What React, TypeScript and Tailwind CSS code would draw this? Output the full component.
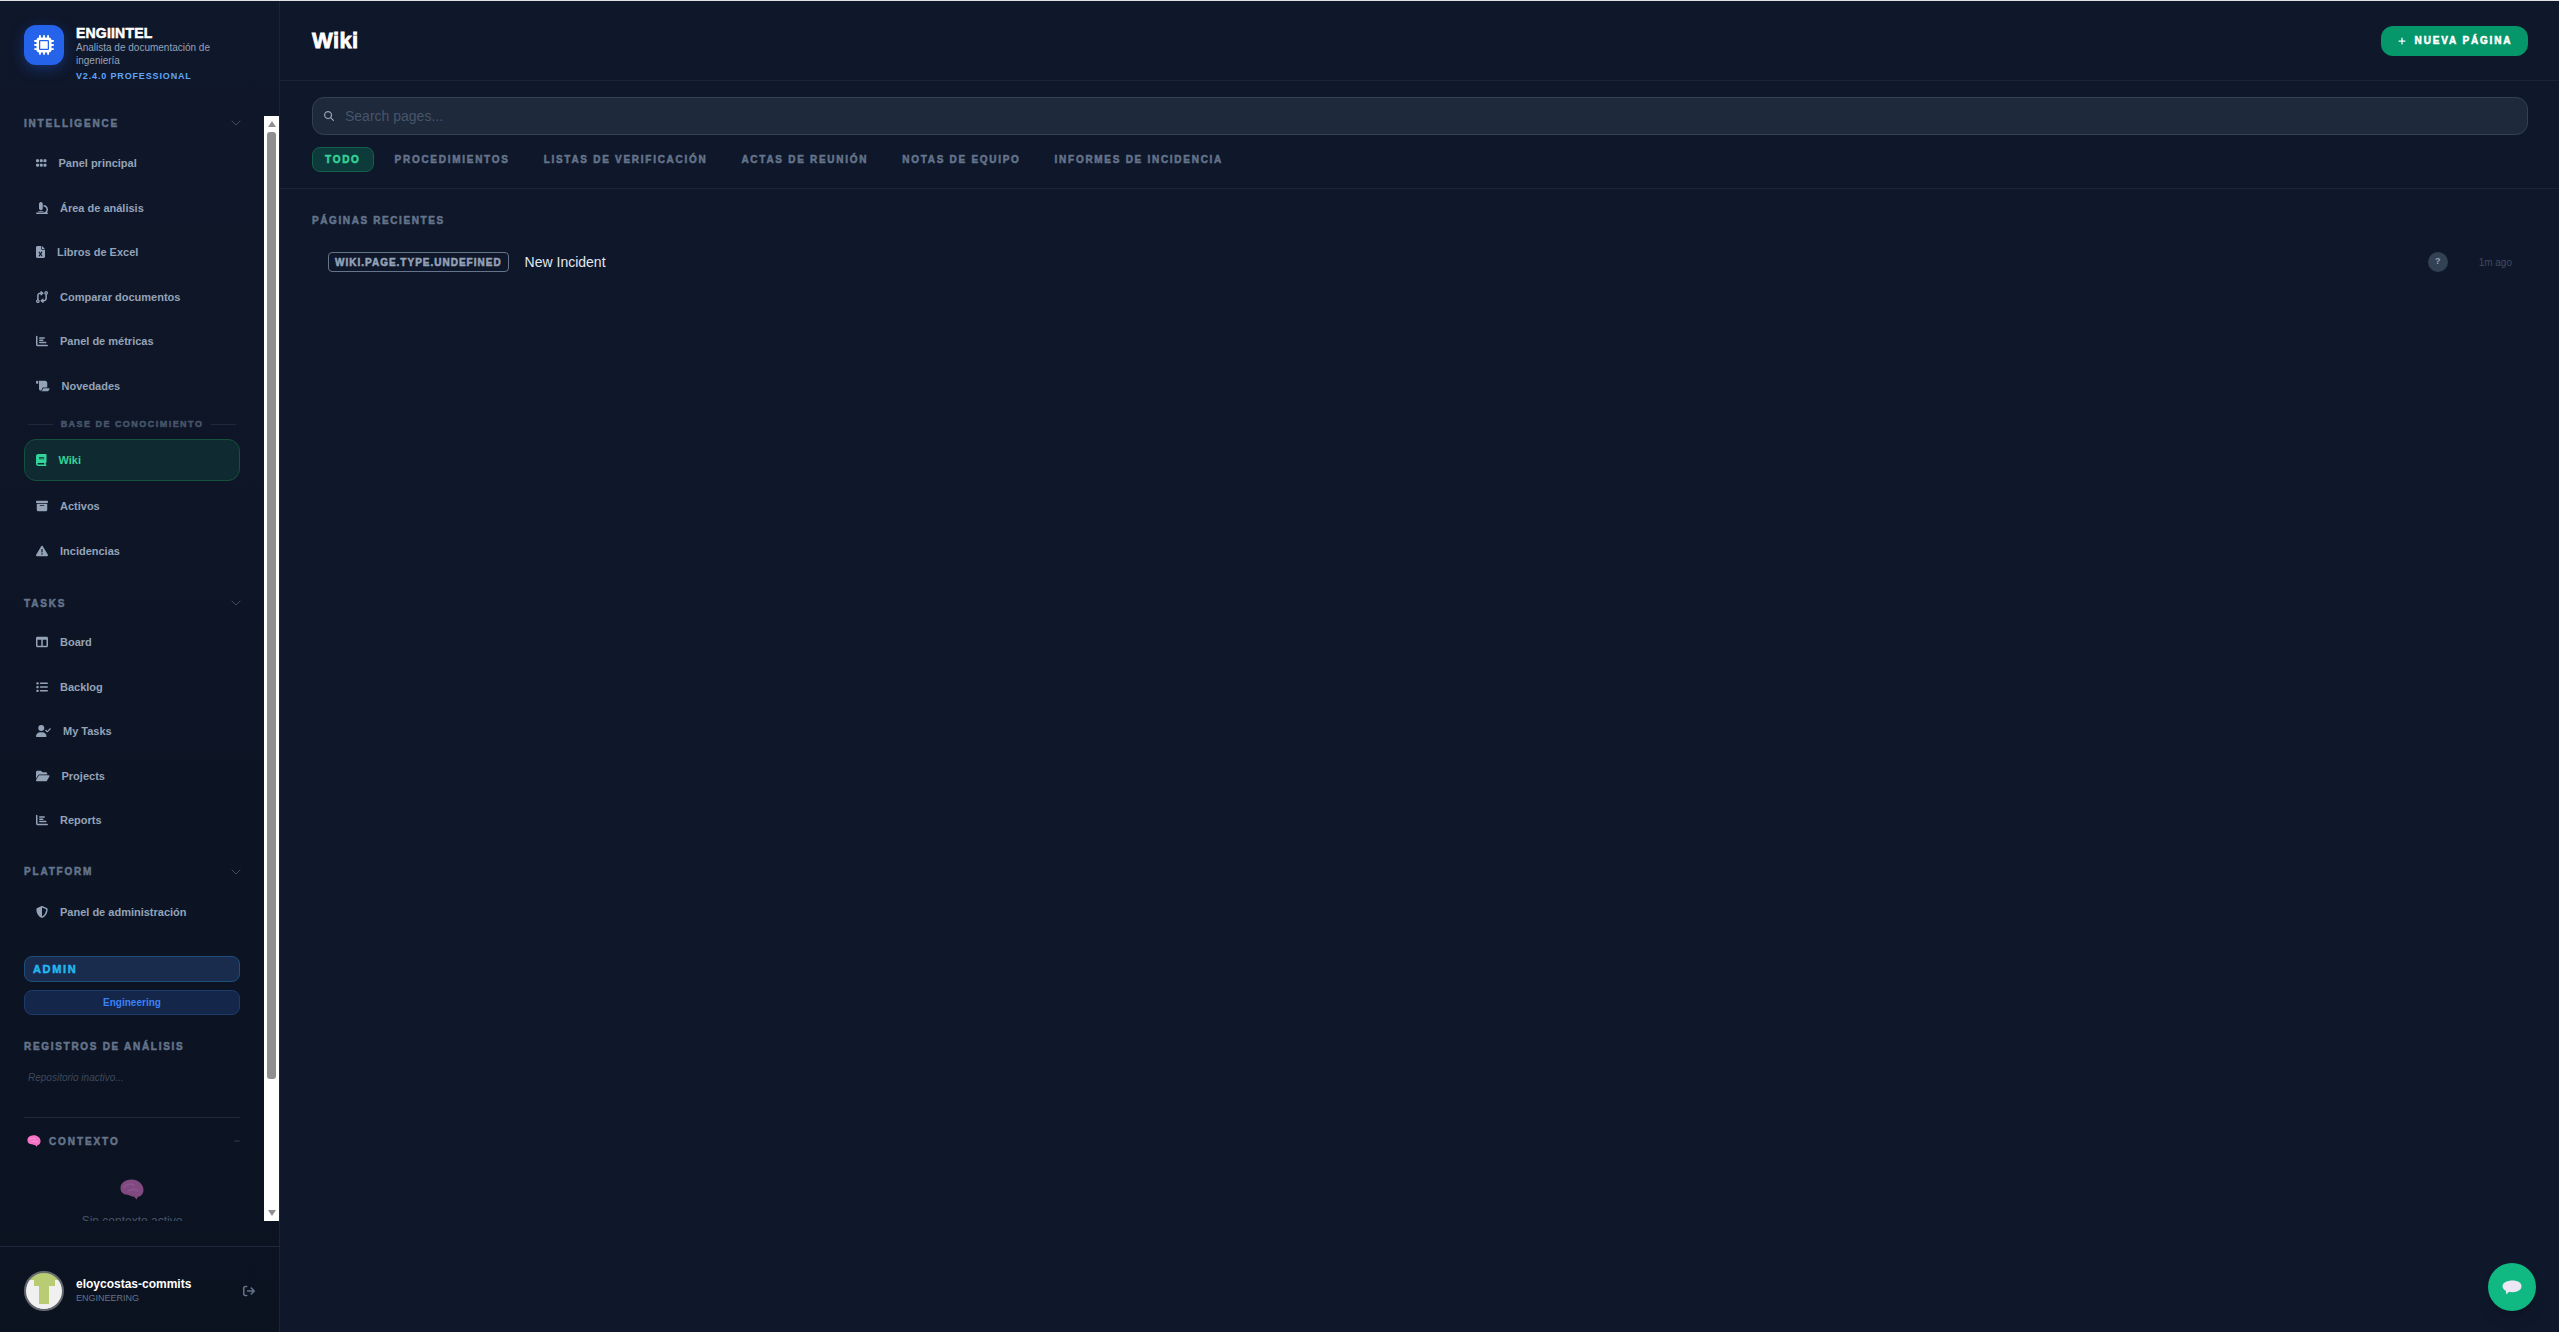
import type { ComponentType, ReactNode } from 'react';
import { ChevronDown, Minus, Plus } from 'lucide-react';
import {
    FaArrowRightFromBracket,
    FaBook,
    FaBoxArchive,
    FaChartBar,
    FaCodeCompare,
    FaFileExcel,
    FaFolderOpen,
    FaGrip,
    FaList,
    FaMagnifyingGlass,
    FaMicrochip,
    FaMicroscope,
    FaScroll,
    FaShieldHalved,
    FaTableColumns,
    FaTriangleExclamation,
    FaUserCheck,
} from 'react-icons/fa6';

type Icon = ComponentType<{ className?: string }>;

const heavy = '[font-weight:900] [-webkit-text-stroke:0.5px_currentColor]';

// iconClass carries the glyph's own width, the icons are not all square
const NavItem = ({ icon: I, iconClass = 'w-3', label, active }: { icon: Icon; iconClass?: string; label: string; active?: boolean }) => {
    if (active) {
        return (
            <div className="flex h-[42px] items-center gap-3 rounded-xl border border-[#14513f] bg-[#0f2a30] pl-[11px] text-[11px] font-bold text-[#34d399]">
                <I className={`h-3 shrink-0 ${iconClass}`} />
                <span>{label}</span>
            </div>
        );
    }
    return (
        <div className="flex h-[44.5px] items-center gap-3 pl-3 text-[11px] font-bold text-[#94a3b8]">
            <I className={`h-3 shrink-0 ${iconClass}`} />
            <span>{label}</span>
        </div>
    );
};

const SectionHeader = ({ title, className }: { title: string; className: string }) => (
    <div className={`flex h-[14px] items-center justify-between ${className}`}>
        <span className={`text-[10px] tracking-[1.8px] text-[#64748b] ${heavy}`}>{title}</span>
        <ChevronDown className="mr-[-4px] h-4 w-4 text-[#3f4b5f]" strokeWidth={1.5} />
    </div>
);

const ScrollBar = () => (
    <div className="flex w-[15px] shrink-0 flex-col items-center bg-white">
        <div className="mt-[5px] h-0 w-0 border-x-[4.5px] border-b-[6px] border-x-transparent border-b-[#8f8f8f]" />
        <div className="mt-[5px] h-[947px] w-[9px] rounded-[3px] bg-[#8f8f8f]" />
        <div className="mb-[5px] mt-auto h-0 w-0 border-x-[4.5px] border-t-[6px] border-x-transparent border-t-[#8f8f8f]" />
    </div>
);

const Identicon = () => (
    <svg viewBox="0 0 40 40" className="h-10 w-10 shrink-0">
        <defs>
            <clipPath id="avatar-clip">
                <circle cx="20" cy="20" r="18.5" />
            </clipPath>
        </defs>
        <g clipPath="url(#avatar-clip)">
            <rect width="40" height="40" fill="#f0f0f0" />
            <path d="M0 0H40V9H31V15H25V33H15V15H10V9H0Z" fill="#b9cc74" />
        </g>
        <circle cx="20" cy="20" r="19" fill="none" stroke="#64686e" strokeWidth="2" />
    </svg>
);

// side view brain, the reference shows the emoji here
const BrainBlob = ({ className, fill, fold }: { className: string; fill: string; fold: string }) => (
    <svg viewBox="0 0 24 21" className={className}>
        <path d="M11 0.5C17.5 0.2 23.5 4.5 23.5 11C23.5 15 21 17.5 18 17.8L16.5 20.5L14 17.6C12 18 10.5 16.5 8.5 16C5 15.8 0.5 14.5 0.5 9C0.5 4 5 0.8 11 0.5Z" fill={fill} />
        <path d="M4 8C7 5 11 4.5 14 6M8 12C11 10 15 10 18 12" fill="none" stroke={fold} strokeWidth="1.4" strokeLinecap="round" />
    </svg>
);

const Tab = ({ children, active }: { children: ReactNode; active?: boolean }) =>
    active ? (
        <div className={`flex h-[25px] items-center rounded-lg border border-[#14604a] bg-[#0d3a3a] px-3 text-[10px] tracking-[1.72px] text-[#34d399] ${heavy}`}>
            {children}
        </div>
    ) : (
        <div className={`flex h-[25px] items-center px-[13px] text-[10px] tracking-[1.72px] text-[#64748b] ${heavy}`}>
            {children}
        </div>
    );

export default function App() {
    return (
        <div className="flex h-screen flex-col overflow-hidden bg-[#0f172a] font-['Liberation_Sans',Arial,sans-serif]">
            <div className="h-px shrink-0 bg-[#dfe3e6]" />
            <div className="flex min-h-0 flex-1">
                <aside className="flex w-[280px] shrink-0 flex-col border-r border-[#1a2435] bg-gradient-to-b from-[#0f172a] to-[#0b1220]">
                    <div className="flex h-[115px] shrink-0 gap-3 pl-6 pt-6">
                        <div className="flex h-10 w-10 shrink-0 items-center justify-center rounded-xl bg-[#2563eb] shadow-[0_4px_14px_rgba(37,99,235,0.35)]">
                            <FaMicrochip className="h-5 w-5 text-white" />
                        </div>
                        <div className="w-[150px]">
                            <div className={`text-[14px] leading-[16px] tracking-[0.2px] text-white ${heavy}`}>ENGIINTEL</div>
                            <div className="text-[10px] leading-[13px] text-[#94a3b8]">Analista de documentación de ingeniería</div>
                            <div className="mt-[2px] text-[9px] font-bold leading-[14px] tracking-[0.85px] text-[#60a5fa]">V2.4.0 PROFESSIONAL</div>
                        </div>
                    </div>

                    <div className="flex h-[1105px] shrink-0">
                        <nav className="min-w-0 flex-1 overflow-hidden pl-6 pr-6">
                            <SectionHeader title="INTELLIGENCE" className="mb-[11px]" />
                            <NavItem icon={FaGrip} iconClass="w-[10.5px]" label="Panel principal" />
                            <NavItem icon={FaMicroscope} label="Área de análisis" />
                            <NavItem icon={FaFileExcel} iconClass="w-[9px]" label="Libros de Excel" />
                            <NavItem icon={FaCodeCompare} label="Comparar documentos" />
                            <NavItem icon={FaChartBar} label="Panel de métricas" />
                            <NavItem icon={FaScroll} iconClass="w-[13.5px]" label="Novedades" />
                            <div className="mb-[8px] mt-[10px] flex h-[13px] items-center gap-2 px-1">
                                <div className="h-px flex-1 bg-[#1e293b]" />
                                <span className={`text-[9px] tracking-[1.47px] text-[#475569] ${heavy}`}>BASE DE CONOCIMIENTO</span>
                                <div className="h-px flex-1 bg-[#1e293b]" />
                            </div>
                            <NavItem icon={FaBook} iconClass="w-[10.5px]" label="Wiki" active />
                            <div className="h-[3px]" />
                            <NavItem icon={FaBoxArchive} label="Activos" />
                            <NavItem icon={FaTriangleExclamation} label="Incidencias" />

                            <SectionHeader title="TASKS" className="mb-[10px] mt-[23px]" />
                            <NavItem icon={FaTableColumns} label="Board" />
                            <NavItem icon={FaList} label="Backlog" />
                            <NavItem icon={FaUserCheck} iconClass="w-[15px]" label="My Tasks" />
                            <NavItem icon={FaFolderOpen} iconClass="w-[13.5px]" label="Projects" />
                            <NavItem icon={FaChartBar} label="Reports" />

                            <SectionHeader title="PLATFORM" className="mb-[11px] mt-[22px]" />
                            <NavItem icon={FaShieldHalved} label="Panel de administración" />

                            <div className={`mt-[22px] flex h-[26px] items-center rounded-lg border border-[#1d4f7c] bg-[#1a2c4e] pl-2 text-[11px] tracking-[0.15em] text-[#22b8f0] ${heavy}`}>
                                ADMIN
                            </div>
                            <div className="mt-2 flex h-[25px] items-center justify-center rounded-lg border border-[#1e3a6b] bg-[#14264a] text-[10px] font-bold text-[#3b82f6]">
                                Engineering
                            </div>

                            <div className={`mt-[25px] text-[10px] leading-[14px] tracking-[1.7px] text-[#64748b] ${heavy}`}>REGISTROS DE ANÁLISIS</div>
                            <div className="mt-[18px] pl-1 text-[10px] italic leading-[12px] text-[#3d495c]">Repositorio inactivo...</div>

                            <div className="mt-[33px] border-t border-[#1e293b] pt-[16px]">
                                <div className="flex h-[14px] items-center">
                                    <BrainBlob className="ml-[3px] h-3 w-[14px]" fill="#f472c4" fold="#fb9fd9" />
                                    <span className={`ml-[8px] text-[10px] tracking-[1.9px] text-[#64748b] ${heavy}`}>CONTEXTO</span>
                                    <Minus className="ml-auto mr-[-1px] h-2 w-2 text-[#475569]" />
                                </div>
                                <div className="mt-[31px] flex flex-col items-center">
                                    <BrainBlob className="h-[21px] w-6" fill="#804a80" fold="#8d5590" />
                                    <div className="mt-[13px] text-[12px] leading-[16px] text-[#475569]">Sin contexto activo</div>
                                </div>
                            </div>
                        </nav>
                        <ScrollBar />
                    </div>

                    <div className="mt-[25px] flex flex-1 items-start border-t border-[#1e293b] pl-6 pt-6">
                        <Identicon />
                        <div className="ml-3 mt-[5px] flex-1">
                            <div className="text-[12px] font-bold leading-[16px] text-white">eloycostas-commits</div>
                            <div className="text-[9px] leading-[12px] text-[#64748b]">ENGINEERING</div>
                        </div>
                        <FaArrowRightFromBracket className="mr-6 mt-[14px] h-3 w-3 text-[#64748b]" />
                    </div>
                </aside>

                <main className="relative min-w-0 flex-1">
                    <header className="flex h-[80px] items-center justify-between border-b border-[#1a2435] pl-8 pr-[31px]">
                        <h1 className="text-[22px] tracking-[0.4px] text-white [font-weight:900] [-webkit-text-stroke:0.8px_currentColor]">Wiki</h1>
                        <button className={`flex h-[30px] w-[147px] items-center justify-center gap-2 rounded-xl bg-[#059669] text-[10px] tracking-[1.85px] text-white ${heavy}`}>
                            <Plus className="h-[10px] w-[10px]" strokeWidth={3} />
                            NUEVA PÁGINA
                        </button>
                    </header>

                    <section className="border-b border-[#1a2435] pb-4 pl-8 pr-[31px] pt-4">
                        <div className="flex h-[38px] items-center rounded-xl border border-[#334155] bg-[#1e293b] pl-[11px]">
                            <FaMagnifyingGlass className="h-[10px] w-[10px] text-[#94a3b8]" />
                            <span className="ml-[11px] text-[14px] text-[#475569]">Search pages...</span>
                        </div>
                        <div className="mt-3 flex gap-2">
                            <Tab active>TODO</Tab>
                            <Tab>PROCEDIMIENTOS</Tab>
                            <Tab>LISTAS DE VERIFICACIÓN</Tab>
                            <Tab>ACTAS DE REUNIÓN</Tab>
                            <Tab>NOTAS DE EQUIPO</Tab>
                            <Tab>INFORMES DE INCIDENCIA</Tab>
                        </div>
                    </section>

                    <section className="pl-8 pr-[31px] pt-[26px]">
                        <h2 className={`text-[10px] leading-[12px] tracking-[1.6px] text-[#64748b] ${heavy}`}>PÁGINAS RECIENTES</h2>
                        <div className="mt-[25px] flex h-[20px] items-center pl-4 pr-4">
                            <span className={`flex h-[20px] items-center rounded border border-[#64748b] px-[6px] text-[10px] tracking-[1px] text-[#94a3b8] ${heavy}`}>
                                WIKI.PAGE.TYPE.UNDEFINED
                            </span>
                            <span className="ml-4 text-[14px] text-[#e2e8f0]">New Incident</span>
                            <span className="ml-auto flex h-5 w-5 items-center justify-center rounded-full bg-[#334155] text-[9px] font-bold text-[#94a3b8]">?</span>
                            <span className="ml-[31px] text-[10px] text-[#3f4c60]">1m ago</span>
                        </div>
                    </section>

                    <button className="absolute bottom-[21px] right-[23px] flex h-12 w-12 items-center justify-center rounded-full bg-[#10b981] shadow-lg">
                        <svg viewBox="0 0 20 15" className="h-[15px] w-5">
                            <path d="M10.5 0.5C15.5 0.5 19.5 2.6 19.5 6.3C19.5 10 15.5 12.2 10.5 12.2C9.2 12.2 8 12 7 11.8L4.5 14.5L3.8 10.8C1.8 9.8 0.5 8.2 0.5 6.3C0.5 2.6 5.5 0.5 10.5 0.5Z" fill="#ece6f5" />
                        </svg>
                    </button>
                </main>
            </div>
        </div>
    );
}
